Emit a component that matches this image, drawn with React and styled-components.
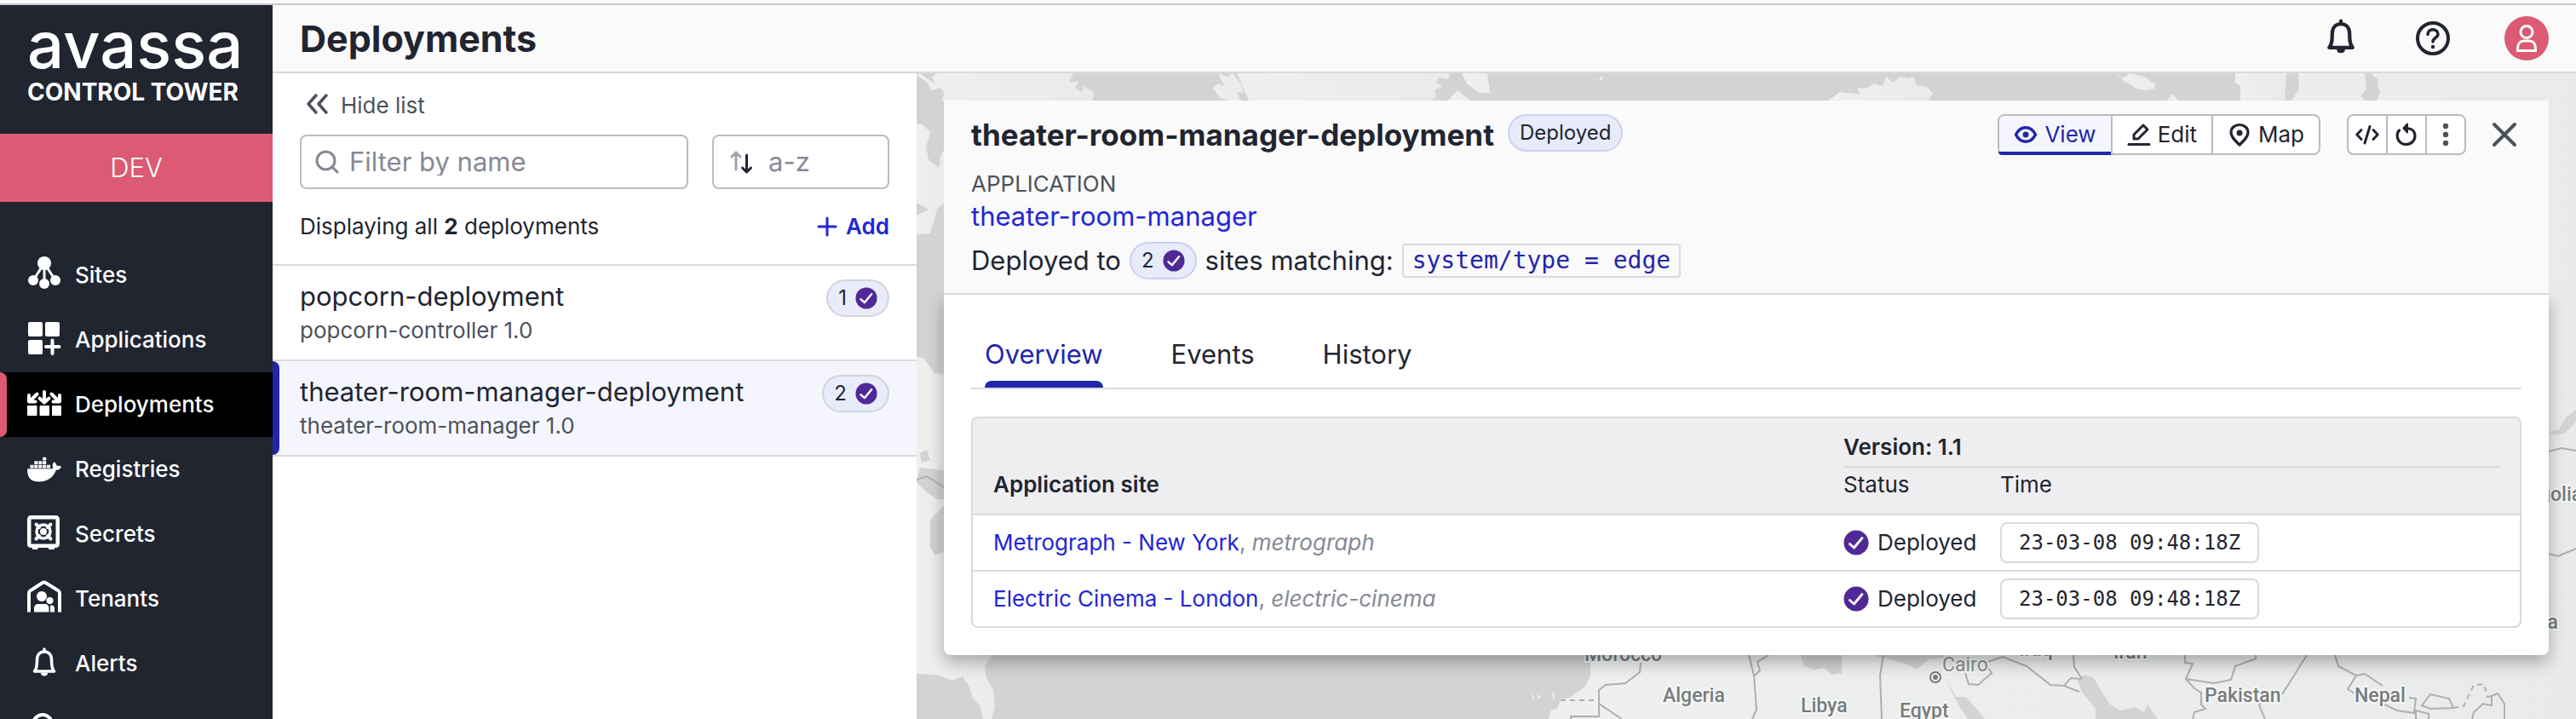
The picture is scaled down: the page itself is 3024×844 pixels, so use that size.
import React from 'react';
import styled, {createGlobalStyle} from 'styled-components';
import {IoLogoDocker} from 'react-icons/io5';

const navItems = [
    {name: 'Sites', icon: <SitesIcon />},
    {name: 'Applications', icon: <ApplicationsIcon />},
    {name: 'Deployments', icon: <DeploymentsIcon />, active: true},
    {name: 'Registries', icon: <IoLogoDocker size={40} />},
    {name: 'Secrets', icon: <SecretsIcon />},
    {name: 'Tenants', icon: <TenantsIcon />},
    {name: 'Alerts', icon: <BellIcon size={40} />},
    {name: '', icon: <CircleIcon />},
];

const deployments = [
    {name: 'popcorn-deployment', app: 'popcorn-controller 1.0', sites: 1},
    {name: 'theater-room-manager-deployment', app: 'theater-room-manager 1.0', sites: 2, active: true},
];

const sites = [
    {label: 'Metrograph - New York', id: 'metrograph', time: '23-03-08 09:48:18Z'},
    {label: 'Electric Cinema - London', id: 'electric-cinema', time: '23-03-08 09:48:18Z'},
];

export default function App() {
    return (
        <Page>
            <GlobalStyle />
            <TopStrip />
            <Shell>
                <Sidebar>
                    <Brand>
                        <Logo>avassa</Logo>
                        <LogoSub>CONTROL TOWER</LogoSub>
                    </Brand>
                    <Environment>DEV</Environment>
                    <Nav>
                        {navItems.map(item => (
                            <NavLink href='#' key={item.name} $active={item.active}>
                                {item.icon}
                                {item.name}
                            </NavLink>
                        ))}
                    </Nav>
                </Sidebar>

                <Main>
                    <Header>
                        <PageTitle>Deployments</PageTitle>
                        <HeaderActions>
                            <IconButton><BellIcon size={48} /></IconButton>
                            <IconButton><HelpIcon /></IconButton>
                            <Avatar><UserIcon /></Avatar>
                        </HeaderActions>
                    </Header>
                    <Content>
                        <DeploymentList />
                        <MapArea>
                            <WorldMap />
                            <DeploymentCard />
                        </MapArea>
                    </Content>
                </Main>
            </Shell>
        </Page>
    )
}

function DeploymentList() {
    return (
        <ListPanel>
            <ListTools>
                <HideButton><DoubleLeftIcon /> Hide list</HideButton>
                <Filters>
                    <FilterBox>
                        <SearchIcon />
                        <FilterInput type='text' placeholder='Filter by name' />
                    </FilterBox>
                    <SortButton><SortIcon /> a-z</SortButton>
                </Filters>
                <Summary>
                    <span>Displaying all <strong>2</strong> deployments</span>
                    <AddButton><PlusIcon /> Add</AddButton>
                </Summary>
            </ListTools>
            {deployments.map(item => (
                <ListRow key={item.name} $active={item.active}>
                    <div>
                        <RowTitle href='#'>{item.name}</RowTitle>
                        <RowSub>{item.app}</RowSub>
                    </div>
                    <Badge>{item.sites} <CheckIcon size={26} /></Badge>
                </ListRow>
            ))}
        </ListPanel>
    )
}

function DeploymentCard() {
    return (
        <Card>
            <CardHeader>
                <CardTop>
                    <CardTitle>theater-room-manager-deployment</CardTitle>
                    <Badge $blue>Deployed</Badge>
                    <CardActions>
                        <ButtonGroup>
                            <GroupButton $active><EyeIcon /> View</GroupButton>
                            <GroupButton><PencilIcon /> Edit</GroupButton>
                            <GroupButton><PinIcon /> Map</GroupButton>
                        </ButtonGroup>
                        <ButtonGroup>
                            <GroupButton $square><CodeIcon /></GroupButton>
                            <GroupButton $square><RestartIcon /></GroupButton>
                            <GroupButton $square><DotsIcon /></GroupButton>
                        </ButtonGroup>
                        <IconButton><CloseIcon /></IconButton>
                    </CardActions>
                </CardTop>
                <FieldLabel>APPLICATION</FieldLabel>
                <AppLink href='#'>theater-room-manager</AppLink>
                <Matching>
                    Deployed to
                    <Badge $blue>2 <CheckIcon size={26} /></Badge>
                    sites matching:
                    <Code>system/type = edge</Code>
                </Matching>
            </CardHeader>

            <CardBody>
                <Tabs>
                    <Tab $active>Overview</Tab>
                    <Tab>Events</Tab>
                    <Tab>History</Tab>
                </Tabs>
                <SiteTable>
                    <colgroup>
                        <col />
                        <StatusCol />
                        <TimeCol />
                    </colgroup>
                    <thead>
                        <tr>
                            <SiteHead rowSpan={2}>Application site</SiteHead>
                            <VersionHead colSpan={2}><VersionLine>Version: 1.1</VersionLine></VersionHead>
                        </tr>
                        <tr>
                            <SubHead>Status</SubHead>
                            <SubHead>Time</SubHead>
                        </tr>
                    </thead>
                    <tbody>
                        {sites.map(site => (
                            <tr key={site.id}>
                                <SiteCell><a href='#'>{site.label}</a>, <em>{site.id}</em></SiteCell>
                                <Cell><Status><CheckIcon size={30} /> Deployed</Status></Cell>
                                <Cell><Time>{site.time}</Time></Cell>
                            </tr>
                        ))}
                    </tbody>
                </SiteTable>
            </CardBody>
        </Card>
    )
}

/* map */

function WorldMap() {
    return (
        <MapSvg viewBox='1076 86 1948 758' preserveAspectRatio='xMinYMin slice'>
            <defs>
                <linearGradient id='land' x1='0' x2='1'>
                    <stop offset='0' stopColor='#edf0ef' />
                    <stop offset='1' stopColor='#e8ebea' />
                </linearGradient>
            </defs>
            <rect x='1076' y='86' width='1948' height='758' fill='#d2d4d3' />
            <g fill='url(#land)'>
                {/* arctic canada */}
                <path d='M1076 88L1088 96 1094 106 1104 103 1109 109 1106 118H1282L1285 110 1273 101 1270 108 1262 103 1266 95 1255 97 1260 86H1100L1094 90 1098 98 1088 92 1080 86Z' />
                <path d='M1076 146L1082 145 1092 155 1090 163 1087 172 1090 187 1102 197 1105 180 1108 178V238L1100 246 1092 274 1076 275Z' />
                {/* greenland and iceland */}
                <path d='M1430 86L1441 90 1447 86 1458 100 1460 110 1452 107 1456 118H1442L1432 115 1424 103 1430 98 1438 102Z' />
                <path d='M1452 86H1702L1700 93 1688 91 1686 98 1694 101 1684 106 1686 114 1680 118H1466L1460 104Z' />
                <path d='M1716 86H1746L1749 109H1736L1722 98Z M1700 118L1711 106 1726 118Z M1877 92L1883 89 1879 95Z' />
                {/* scandinavia */}
                <path d='M2146 118L2160 108 2184 111 2180 104 2192 103 2200 98 2210 101 2214 90 2222 97 2230 90 2240 92 2246 90 2250 100 2262 102 2269 109 2264 118Z' />
                {/* russian coast */}
                <path d='M2484 86L2492 92 2500 86 2518 90 2530 99 2530 104 2520 106 2508 104 2502 100 2494 96Z M2544 118L2550 110 2558 118Z' />
                <path d='M2624 86H2684L2682 118H2630L2630 101 2624 97Z' />
                <path d='M2698 86H2776L2778 104 2772 112 2776 118H2690L2699 104Z M2784 86H3024V844H2400V118H2790L2794 108Z' />
                {/* north america */}
                <path d='M1076 419L1084 420 1097 438 1108 439 1200 440V769H1164L1156 782 1158 796 1166 810 1168 830 1164 844H1154L1150 828 1142 820 1138 806 1130 794 1118 799 1100 792 1076 791Z' />
                {/* africa and asia */}
                <path d='M1867 760V793L1861 806 1852 812 1844 818 1832 822 1828 832 1821 834 1818 844H3024V700H1867Z' />
                <path d='M1798 814l3 5-2 2zM1804 815l5 3-3 3zM1822 814l3-2v8l-2 2z' />
            </g>
            <g fill='#d2d4d3'>
                <path d='M1076 238L1090 246 1076 253Z M1080 532L1088 528 1092 540 1082 543Z M1080 549L1108 552V586H1100L1088 578 1076 566Z' />
                <path d='M1092 610L1108 594V648L1098 652 1092 642Z' />
                <path d='M2112 765L2118 782 2130 786 2142 784 2150 792 2162 790V765Z M2190 765L2208 772 2218 774 2240 780 2250 786 2264 774 2282 772V765Z' />
                <path d='M2283 794L2296 818 2308 818 2320 832 2330 844H2310L2298 826Z' />
                <path d='M2438 798L2448 792 2458 796 2468 813 2477 827 2490 834 2506 830 2517 836 2521 827 2533 844H2460V832L2444 812Z' />
                <path d='M2784 90l8 2-2 10 4 8-6 4-4-8z' />
                <path d='M2992 508L3004 504 3012 490 3024 481V495L3012 508 3002 511Z' />
            </g>
            <g fill='none' stroke='#adb0af' strokeWidth='2'>
                <path d='M1076 563L1088 559 1108 572' />
                <path d='M1926 778L1925 789 1908 802 1885 804 1877 810V826L1904 844M1844 844V841H1877V826' />
                <path d='M2053 769L2059 793 2062 833 2057 844M2076 769L2063 777 2066 787 2060 793' />
                <path d='M2211 769L2207 793 2209 844' />
                <path d='M2307 790L2311 803 2322 804 2338 790 2330 778 2351 771 2379 782 2407 804 2423 805 2431 796 2444 797M2423 805L2441 812M2434 769L2435 783 2444 797' />
                <path d='M2565 769V778L2574 779 2566 797 2599 802 2619 798 2624 782 2648 773V769M2566 797L2576 808 2584 813V827L2589 832 2576 836 2574 844M2708 769L2679 815M2660 810L2652 828 2659 844' />
                <path d='M2741 769L2745 782 2766 793 2756 809 2764 814M2766 793L2776 791 2797 805M2791 823L2814 834 2834 837 2836 820 2828 819M2843 828L2853 815 2875 820 2880 831 2853 832ZM2836 844V834L2851 838V844' />
                <path d='M2902 844L2904 836 2915 826 2925 828V817L2932 814 2940 826V844' />
                <path d='M2992 530L3007 526 3024 529M2992 650L3003 653 3024 644' />
                <path d='M1832 822H1877M2880 831L2892 829 2904 804 2916 803 2920 818 2928 817' strokeDasharray='6 5' />
            </g>
            <circle cx='2272' cy='795' r='6' fill='#f4f5f5' stroke='#777c7b' strokeWidth='2' />
            <circle cx='2272' cy='795' r='3' fill='#777c7b' />
            <MapLabel x='1860' y='776'>Morocco</MapLabel>
            <MapLabel x='1952' y='824'>Algeria</MapLabel>
            <MapLabel x='2114' y='836'>Libya</MapLabel>
            <MapLabel x='2230' y='842'>Egypt</MapLabel>
            <MapLabel x='2280' y='788' $light>Cairo</MapLabel>
            <MapLabel x='2370' y='770'>Iraq</MapLabel>
            <MapLabel x='2481' y='773'>Iran</MapLabel>
            <MapLabel x='2588' y='824'>Pakistan</MapLabel>
            <MapLabel x='2764' y='824'>Nepal</MapLabel>
            <MapLabel x='2935' y='588'>Mongolia</MapLabel>
            <MapLabel x='2944' y='738'>China</MapLabel>
        </MapSvg>
    )
}

/* icons */

function SitesIcon() {
    return (
        <Icon viewBox='0 0 40 40' fill='currentColor'>
            <path d='M20 6L7 26M20 6V30M20 6L33 26' stroke='currentColor' strokeWidth='3' />
            <circle cx='20' cy='6' r='8' />
            <circle cx='7' cy='26' r='6' />
            <circle cx='20' cy='30' r='6' />
            <circle cx='33' cy='26' r='6' />
        </Icon>
    )
}

function ApplicationsIcon() {
    return (
        <Icon viewBox='0 0 40 40' fill='currentColor'>
            <rect x='1' y='-1' width='17' height='17' rx='2' />
            <rect x='21' y='-1' width='17' height='17' rx='2' />
            <rect x='1' y='20' width='17' height='17' rx='2' />
            <path d='M29.500 20.500V36M22 28H37.500' stroke='currentColor' strokeWidth='4' strokeLinecap='round' />
        </Icon>
    )
}

function DeploymentsIcon() {
    return (
        <Icon viewBox='0 0 40 40' fill='currentColor'>
            <rect x='0' y='21' width='11.500' height='12' rx='1' />
            <rect x='14.500' y='21' width='11.500' height='12' rx='1' />
            <rect x='29' y='21' width='11' height='12' rx='1' />
            <g stroke='currentColor' strokeWidth='4' strokeLinecap='round' strokeLinejoin='round' fill='none'>
                <path d='M11.500 7.500L3 16M2 9V16.500H9.500' />
                <path d='M20 5V16M14.500 12.500L20 17.500 25.500 12.500' />
                <path d='M28.500 7.500L37 16M38 9V16.500H30.500' />
            </g>
        </Icon>
    )
}

function SecretsIcon() {
    return (
        <Icon viewBox='0 0 40 40' fill='none' stroke='currentColor'>
            <rect x='2.200' y='.200' width='33.500' height='33.500' rx='2' strokeWidth='4.500' />
            <path d='M6 36.500H12.500M25 36.500H32' strokeWidth='3' />
            <path d='M10.500 8.500L14 12M27.500 8.500L24 12M10.500 25.500L14 22M27.500 25.500L24 22' strokeWidth='4' strokeLinecap='round' />
            <circle cx='19' cy='17' r='8' strokeWidth='3.500' />
            <circle cx='19' cy='17' r='4' fill='currentColor' stroke='none' />
        </Icon>
    )
}

function TenantsIcon() {
    return (
        <Icon viewBox='0 0 40 40' fill='currentColor'>
            <path d='M2 35.500V13C2 12 2.500 11 3.500 10.300L18 1C19.300 .200 20.300 .200 21.500 1L36.500 10.300C37.500 11 38 12 38 13V35.500' fill='none' stroke='currentColor' strokeWidth='4' />
            <circle cx='17' cy='17' r='6' />
            <circle cx='26.500' cy='22' r='4' />
            <path d='M8 35.500V31C8 28 10 26 13 26H20.500C23.500 26 25.500 28 25.500 31V35.500Z' />
            <path d='M27 35.500V27.500H28.500C31 27.500 32 29 32 31V35.500Z' />
        </Icon>
    )
}

function BellIcon({size}) {
    return (
        <Icon $size={size} viewBox='0 0 40 40' fill='none' stroke='currentColor' strokeWidth='3.500' strokeLinecap='round' strokeLinejoin='round'>
            <path d='M20 3V6M8.500 29C11.500 26 11.500 21 11.500 15.500C11.500 9.500 15 6 20 6S28.500 9.500 28.500 15.500C28.500 21 28.500 26 31.500 29Z' />
            <path d='M17 31.500H23C22.500 34 17.500 34 17 31.500Z' strokeWidth='2' fill='currentColor' />
        </Icon>
    )
}

function CircleIcon() {
    return (
        <Icon viewBox='0 0 40 40' fill='none' stroke='currentColor' strokeWidth='4'>
            <circle cx='18' cy='15' r='11' />
        </Icon>
    )
}

function HelpIcon() {
    return (
        <Icon viewBox='0 0 40 40' fill='none' stroke='currentColor' strokeWidth='4' strokeLinecap='round'>
            <circle cx='20' cy='20' r='18' />
            <path d='M14 15.500C14 12 16.500 9.800 20 9.800S26 12 26 15.300C26 19.500 20 19 20 24' strokeWidth='3.500' />
            <circle cx='20' cy='30' r='2.200' fill='currentColor' stroke='none' />
        </Icon>
    )
}

function UserIcon() {
    return (
        <Icon $size={52} viewBox='0 0 52 52' fill='none' stroke='#fff' strokeWidth='3'>
            <circle cx='26' cy='18.500' r='7' />
            <path d='M15.500 40.500V37.500C15.500 32 18.500 29 23 29H29C33.500 29 36.500 32 36.500 37.500V40.500Z' />
        </Icon>
    )
}

function DoubleLeftIcon() {
    return (
        <Icon viewBox='0 0 40 40' fill='none' stroke='currentColor' strokeWidth='3.500' strokeLinecap='round' strokeLinejoin='round'>
            <path d='M19 8L10 18 19 28M31 8L22 18 31 28' />
        </Icon>
    )
}

function SearchIcon() {
    return (
        <Icon $size={28} viewBox='0 0 28 28' fill='none' stroke='currentColor' strokeWidth='3' strokeLinecap='round'>
            <circle cx='12.500' cy='12.500' r='10.500' />
            <path d='M20 20L26 26' />
        </Icon>
    )
}

function SortIcon() {
    return (
        <Icon $size={28} viewBox='0 0 28 28' fill='none' strokeWidth='3' strokeLinecap='round' strokeLinejoin='round'>
            <path d='M8 23V3M3 8L8 3 13 8' stroke='#a0a3a9' />
            <path d='M20.500 6V26M15.500 21L20.500 26 25.500 21' stroke='#212530' />
        </Icon>
    )
}

function PlusIcon() {
    return (
        <Icon $size={24} viewBox='0 0 24 24' fill='none' stroke='currentColor' strokeWidth='3' strokeLinecap='round'>
            <path d='M12 2V22M2 12H22' />
        </Icon>
    )
}

function CheckIcon({size}) {
    return (
        <Icon $size={size} viewBox='0 0 30 30'>
            <circle cx='15' cy='15' r='14.500' fill='#4f2a97' />
            <path d='M7.500 16.500L12.500 21 22 9.500' fill='none' stroke='#fff' strokeWidth='2.800' strokeLinecap='round' strokeLinejoin='round' />
        </Icon>
    )
}

function EyeIcon() {
    return (
        <Icon $size={28} viewBox='0 0 28 28' fill='none' stroke='currentColor' strokeWidth='3.500' strokeLinejoin='round'>
            <path d='M2.500 14C5 9 8.500 5.800 14 5.800S23 9 25.500 14C23 19 19.500 22.200 14 22.200S5 19 2.500 14Z' />
            <circle cx='14' cy='14' r='3.500' fill='currentColor' stroke='none' />
        </Icon>
    )
}

function PencilIcon() {
    return (
        <Icon $size={28} viewBox='0 0 28 28' fill='none' stroke='currentColor' strokeWidth='3' strokeLinejoin='round' strokeLinecap='round'>
            <path d='M8 19V14L19 3 24 8 13 19Z' />
            <path d='M2 25.500H26' />
        </Icon>
    )
}

function PinIcon() {
    return (
        <Icon $size={28} viewBox='0 0 28 28' fill='none' stroke='currentColor' strokeWidth='3.200' strokeLinejoin='round'>
            <path d='M14 26C9 21 4 17 4 11.500C4 6 8.500 2.500 14 2.500S24 6 24 11.500C24 17 19 21 14 26Z' />
            <circle cx='14' cy='12' r='3.500' fill='currentColor' stroke='none' />
        </Icon>
    )
}

function CodeIcon() {
    return (
        <Icon $size={28} viewBox='0 0 28 28' fill='none' stroke='currentColor' strokeWidth='3' strokeLinecap='round' strokeLinejoin='round'>
            <path d='M7 8.500L1.800 14 7 19.500M21 8.500L26.200 14 21 19.500M17 4.500L11 24' />
        </Icon>
    )
}

function RestartIcon() {
    return (
        <Icon $size={28} viewBox='0 0 28 28' fill='none' stroke='currentColor' strokeWidth='3.200' strokeLinecap='round' strokeLinejoin='round'>
            <path d='M5.500 9C3.500 11 3 13.500 3.200 16C3.500 21.500 8 25.500 13.500 25.500S24 21.500 24 15.500C24 10 20 6.500 13 6.500' />
            <path d='M15 1.500L10.500 6.500 15 11.500Z' fill='currentColor' strokeWidth='2' />
        </Icon>
    )
}

function DotsIcon() {
    return (
        <Icon $size={28} viewBox='0 0 28 28' fill='#4d525c'>
            <circle cx='14' cy='4' r='3.200' />
            <circle cx='14' cy='14' r='3.200' />
            <circle cx='14' cy='24' r='3.200' />
        </Icon>
    )
}

function CloseIcon() {
    return (
        <Icon $size={28} viewBox='0 0 28 28' fill='none' stroke='#4d525c' strokeWidth='4' strokeLinecap='round'>
            <path d='M2 2L26 26M26 2L2 26' />
        </Icon>
    )
}

const GlobalStyle = createGlobalStyle`
* {
    box-sizing: border-box;
}
body {
    margin: 0;
    color: #212530;
    font-family: Inter, "Liberation Sans", sans-serif;
    font-size: 26px;
    line-height: 32px;
}
a {
    color: #2226d6;
    text-decoration: none;
}
button, input {
    margin: 0;
    padding: 0;
    border: 0;
    background: none;
    color: inherit;
    font: inherit;
}
`;

const Icon = styled.svg`
    flex: none;
    display: block;
    width: ${p => p.$size || 40}px;
    height: ${p => p.$size || 40}px;
    overflow: visible;
`;

const Page = styled.div`
    display: flex;
    flex-direction: column;
    height: 100vh;
    overflow: hidden;
`;

const TopStrip = styled.div`
    flex: none;
    height: 6px;
    background: #fafafa;
    border-bottom: 2px solid #c9c9cd;
`;

const Shell = styled.div`
    flex: 1;
    display: flex;
    min-height: 0;
`;

const Sidebar = styled.aside`
    flex: none;
    width: 320px;
    background: #212530;
    color: #fff;
    overflow: hidden;
`;

const Brand = styled.div`
    padding: 6px 0 33px 32px;
    white-space: nowrap;
`;

const Logo = styled.div`
    font-size: 76px;
    font-weight: 500;
    line-height: 80px;
`;

const LogoSub = styled.div`
    font-size: 28px;
    font-weight: 700;
`;

const Environment = styled.div`
    display: flex;
    align-items: center;
    justify-content: center;
    height: 80px;
    background: #dc5a73;
    font-size: 31px;
    font-weight: 300;
`;

const Nav = styled.nav`
    padding-top: 48px;
`;

const NavLink = styled.a`
    position: relative;
    display: flex;
    align-items: center;
    gap: 16px;
    height: 76px;
    padding: 0 32px;
    color: #fff;
    font-weight: 500;
    background: ${p => p.$active ? '#000' : 'none'};

    &::before {
        content: '';
        display: ${p => p.$active ? 'block' : 'none'};
        position: absolute;
        top: 0;
        bottom: 0;
        left: 0;
        width: 8px;
        border-radius: 0 8px 8px 0;
        background: #dc5a73;
    }
`;

const Main = styled.main`
    flex: 1;
    display: flex;
    flex-direction: column;
    min-width: 0;
`;

const Header = styled.header`
    flex: none;
    display: flex;
    align-items: center;
    justify-content: space-between;
    height: 80px;
    padding: 0 32px;
    background: #fafafa;
    border-bottom: 2px solid #d9d9de;
`;

const PageTitle = styled.h1`
    margin: 0;
    font-size: 43px;
    font-weight: 700;
    line-height: 48px;
`;

const HeaderActions = styled.div`
    display: flex;
    align-items: center;
    gap: 64px;
`;

const IconButton = styled.button`
    display: flex;
`;

const Avatar = styled.button`
    display: flex;
    border-radius: 50%;
    background: #dc5a73;
`;

const Content = styled.div`
    flex: 1;
    display: flex;
    min-height: 0;
`;

const ListPanel = styled.section`
    flex: none;
    width: 756px;
    background: #fff;
`;

const ListTools = styled.div`
    padding: 22px 32px 28px;
    border-bottom: 2px solid #d9d9de;
`;

const HideButton = styled.button`
    display: flex;
    align-items: center;
    gap: 8px;
    height: 32px;
    color: #4d525c;
`;

const Filters = styled.div`
    display: flex;
    gap: 28px;
    margin: 18px 0 28px;
`;

const FilterBox = styled.label`
    flex: 1;
    min-width: 0;
    display: flex;
    align-items: center;
    gap: 12px;
    height: 64px;
    padding: 0 16px;
    border: 2px solid #bbbbc1;
    border-radius: 8px;
    color: #858994;
`;

const FilterInput = styled.input`
    flex: 1;
    min-width: 0;
    font-size: 31px;
    outline: none;

    &::placeholder {
        color: #858994;
        opacity: 1;
    }
`;

const SortButton = styled.button`
    flex: none;
    display: flex;
    align-items: center;
    gap: 18px;
    width: 208px;
    height: 64px;
    padding: 0 18px;
    border: 2px solid #bbbbc1;
    border-radius: 8px;
    color: #858994;
    font-size: 31px;
    white-space: nowrap;
`;

const Summary = styled.div`
    display: flex;
    align-items: center;
    justify-content: space-between;
`;

const AddButton = styled.button`
    display: flex;
    align-items: center;
    gap: 10px;
    color: #2226d6;
    font-weight: 600;
`;

const ListRow = styled.div`
    position: relative;
    display: flex;
    align-items: flex-start;
    justify-content: space-between;
    padding: 16px 32px 14px;
    border-bottom: 2px solid #d9d9de;
    background: ${p => p.$active ? '#f5f6fd' : '#fff'};

    &::before {
        content: '';
        display: ${p => p.$active ? 'block' : 'none'};
        position: absolute;
        top: 0;
        bottom: 0;
        left: 0;
        width: 8px;
        border-radius: 0 8px 8px 0;
        background: #2226ab;
    }
`;

const RowTitle = styled.a`
    display: block;
    color: #212530;
    font-size: 31px;
    line-height: 40px;
`;

const RowSub = styled.div`
    color: #4d525c;
    line-height: 40px;
`;

const Badge = styled.span`
    display: inline-flex;
    align-items: center;
    gap: 10px;
    height: 44px;
    padding: 0 12px;
    border: 2px solid ${p => p.$blue ? '#cbd0f1' : '#d3d3da'};
    border-radius: 22px;
    background: #e8ebf9;
    font-size: 24px;
`;

const MapArea = styled.section`
    position: relative;
    flex: 1;
    min-width: 0;
    padding: 32px;
    overflow: hidden;
`;

const MapSvg = styled.svg`
    position: absolute;
    top: 0;
    left: 0;
    width: 100%;
    height: 100%;
`;

const MapLabel = styled.text`
    font-family: Roboto, sans-serif;
    font-size: 23px;
    font-weight: ${p => p.$light ? 400 : 500};
    fill: ${p => p.$light ? '#8b8f8e' : '#777c7b'};
    stroke: #f6f7f7;
    stroke-width: 4px;
    stroke-linejoin: round;
    paint-order: stroke;
`;

const Card = styled.article`
    position: relative;
`;

const CardHeader = styled.div`
    position: relative;
    z-index: 1;
    padding: 16px 32px;
    background: #fafafa;
    border-bottom: 2px solid #d9d9de;
`;

const CardTop = styled.div`
    display: flex;
    align-items: flex-start;
    gap: 16px;
    margin-bottom: 18px;
`;

const CardTitle = styled.h2`
    margin: 0;
    font-size: 35px;
    font-weight: 700;
    line-height: 48px;
`;

const CardActions = styled.div`
    display: flex;
    align-items: center;
    gap: 31px;
    margin-left: auto;
    padding-right: 6px;
`;

const ButtonGroup = styled.div`
    display: flex;
    height: 48px;
    border: 2px solid #bbbbc1;
    border-radius: 8px;
    background: #fff;
`;

const GroupButton = styled.button`
    position: relative;
    display: flex;
    align-items: center;
    justify-content: center;
    gap: 8px;
    padding: ${p => p.$square ? '0 8px' : '0 17px'};
    color: ${p => p.$active ? '#2226ab' : '#212530'};
    background: ${p => p.$active ? '#f5f6fd' : 'none'};
    border-radius: ${p => p.$active ? '6px 0 0 6px' : '0'};

    & + & {
        border-left: 2px solid #bbbbc1;
    }

    &::after {
        content: '';
        display: ${p => p.$active ? 'block' : 'none'};
        position: absolute;
        right: 0;
        bottom: -2px;
        left: -1px;
        height: 4px;
        border-radius: 0 0 0 6px;
        background: #2226ab;
    }
`;

const FieldLabel = styled.div`
    color: #4d525c;
`;

const AppLink = styled.a`
    display: block;
    margin-top: 2px;
    font-size: 31px;
    line-height: 40px;
`;

const Matching = styled.div`
    display: flex;
    align-items: center;
    gap: 10px;
    margin-top: 10px;
    font-size: 31px;
`;

const Code = styled.code`
    height: 40px;
    padding: 0 10px;
    border: 2px solid #d9d9de;
    border-radius: 4px;
    color: #2226ab;
    font-family: "DejaVu Sans Mono", monospace;
    font-size: 28px;
    line-height: 36px;
`;

const CardBody = styled.div`
    padding: 50px 32px 32px;
    background: #fff;
    border-radius: 0 0 8px 8px;
    box-shadow: 0 8px 20px rgba(0, 0, 0, 0.3);
`;

const Tabs = styled.div`
    display: flex;
    gap: 80px;
    padding-left: 16px;
    border-bottom: 2px solid #d9d9de;
`;

const Tab = styled.button`
    display: flex;
    flex-direction: column;
    gap: 11px;
    color: ${p => p.$active ? '#2226ab' : 'inherit'};
    font-size: 31px;
    line-height: 40px;

    &::after {
        content: '';
        width: 100%;
        height: 8px;
        border-radius: 8px 8px 0 0;
        background: ${p => p.$active ? '#2226ab' : 'none'};
    }
`;

const SiteTable = styled.table`
    width: 100%;
    margin-top: 32px;
    table-layout: fixed;
    border: 2px solid #d9d9de;
    border-radius: 8px;
    border-collapse: separate;
    border-spacing: 0;
    overflow: hidden;
    line-height: 36px;

    th {
        text-align: left;
        background: #eeeef0;
    }
    tbody tr:last-child td {
        height: 64px;
        border-bottom: 0;
    }
`;

const StatusCol = styled.col`
    width: 184px;
`;

const TimeCol = styled.col`
    width: 610px;
`;

const SiteHead = styled.th`
    padding: 0 24px 16px;
    border-bottom: 2px solid #d9d9de;
    font-weight: 600;
    vertical-align: bottom;
`;

const VersionHead = styled.th`
    padding: 16px 24px 0 0;
    font-weight: 600;
`;

const VersionLine = styled.div`
    padding-bottom: 4px;
    border-bottom: 2px solid #d9d9de;
`;

const SubHead = styled.th`
    padding: 2px 0 16px;
    border-bottom: 2px solid #d9d9de;
    font-weight: 400;
`;

const Cell = styled.td`
    height: 66px;
    padding: 0;
    border-bottom: 2px solid #d9d9de;
`;

const SiteCell = styled(Cell)`
    padding: 0 24px;
    color: #858994;
`;

const Status = styled.div`
    display: flex;
    align-items: center;
    gap: 10px;
`;

const Time = styled.time`
    display: inline-flex;
    align-items: center;
    height: 48px;
    padding: 0 20px;
    border: 2px solid #d9d9de;
    border-radius: 8px;
    font-family: "DejaVu Sans Mono", monospace;
    font-size: 24px;
    vertical-align: middle;
`;
